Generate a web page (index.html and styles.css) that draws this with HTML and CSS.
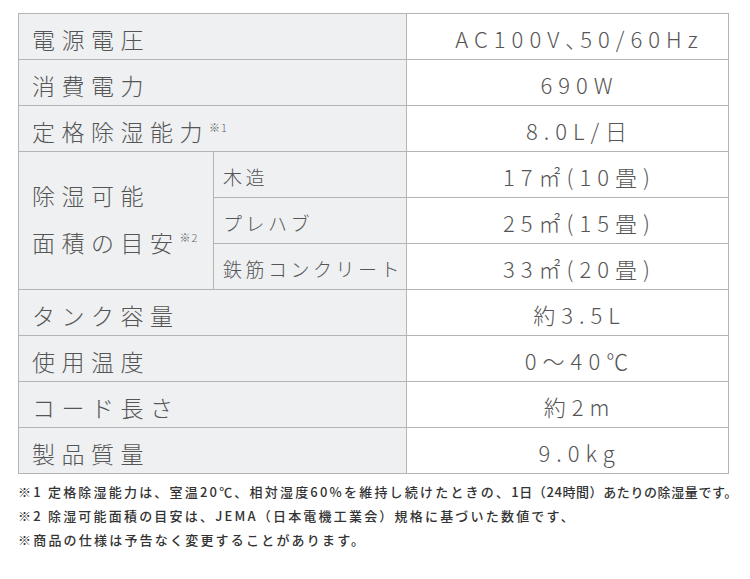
FILE: index.html
```html
<!DOCTYPE html>
<html lang="ja">
<head>
<meta charset="utf-8">
<title>仕様</title>
<link rel="stylesheet" href="styles.css">
</head>
<body>
<div class="page">
  <table class="spec">
    <colgroup>
      <col class="c-label">
      <col class="c-sub">
      <col class="c-value">
    </colgroup>
    <tr><th colspan="2" class="label">電源電圧</th><td class="value">AC100V<span class="pc">、</span>50/60Hz</td></tr>
    <tr><th colspan="2" class="label">消費電力</th><td class="value">690W</td></tr>
    <tr><th colspan="2" class="label">定格除湿能力<sup class="note">※1</sup></th><td class="value">8.0L/日</td></tr>
    <tr>
      <th rowspan="3" class="label multi">除湿可能<br>面積の目安<sup class="note">※2</sup></th>
      <th class="sub">木造</th><td class="value">17㎡(10畳)</td>
    </tr>
    <tr><th class="sub">プレハブ</th><td class="value">25㎡(15畳)</td></tr>
    <tr><th class="sub">鉄筋コンクリート</th><td class="value">33㎡(20畳)</td></tr>
    <tr><th colspan="2" class="label">タンク容量</th><td class="value">約3.5L</td></tr>
    <tr><th colspan="2" class="label">使用温度</th><td class="value">0～40℃</td></tr>
    <tr><th colspan="2" class="label">コード長さ</th><td class="value">約2m</td></tr>
    <tr><th colspan="2" class="label">製品質量</th><td class="value">9.0kg</td></tr>
  </table>
  <div class="notes">
    <p>※1 定格除湿能力は、室温20℃、相対湿度60%を維持し続けたときの、<span class="tight">1日（24時間）あたりの除湿量です。</span></p>
    <p>※2 除湿可能面積の目安は、JEMA（日本電機工業会）規格に基づいた数値です、</p>
    <p>※商品の仕様は予告なく変更することがあります。</p>
  </div>
</div>
</body>
</html>
```
FILE: styles.css
```css
html, body {
  margin: 0;
  padding: 0;
  background: #ffffff;
}

.page {
  padding: 13px 0 0 18px;
  font-family: "Noto Sans CJK JP", "Noto Sans", sans-serif;
}

.spec {
  border-collapse: collapse;
  table-layout: fixed;
  width: 710px;
  border: 1px solid #a9a9a9;
}

.c-label { width: 195px; }
.c-sub { width: 193px; }
.c-value { width: 322px; }

.spec th,
.spec td {
  border: 1px solid #b4b4b4;
  height: 42px;
  padding: 3px 0 0 0;
  font-weight: 300;
  color: #555555;
  white-space: nowrap;
  line-height: 1;
}

.label {
  background: #eef0f2;
  text-align: left;
  font-size: 23px;
  letter-spacing: 6.5px;
}

.spec .label {
  height: 40px;
  padding: 5px 0 0 13px;
}

.spec .multi {
  line-height: 47px;
  padding: 0 0 3px 13px;
}

.spec .sub {
  background: #eef0f2;
  text-align: left;
  font-size: 19px;
  letter-spacing: 3.5px;
  padding-left: 9px;
}

.spec .value {
  background: #ffffff;
  text-align: center;
  font-size: 22px;
  letter-spacing: 6px;
  padding-left: 24px;
}

.pc {
  font-feature-settings: "palt";
  letter-spacing: 4px;
}

.note {
  font-size: 11px;
  letter-spacing: 1px;
  line-height: 0;
  vertical-align: 9px;
  color: #666666;
}

.multi .note {
  vertical-align: 10px;
}

.notes {
  margin-top: 6px;
  color: #333333;
  font-size: 13px;
  line-height: 24px;
  letter-spacing: 2.2px;
  font-weight: 500;
}

.notes p {
  margin: 0;
  white-space: nowrap;
}

.tight {
  letter-spacing: 0.6px;
}
```
